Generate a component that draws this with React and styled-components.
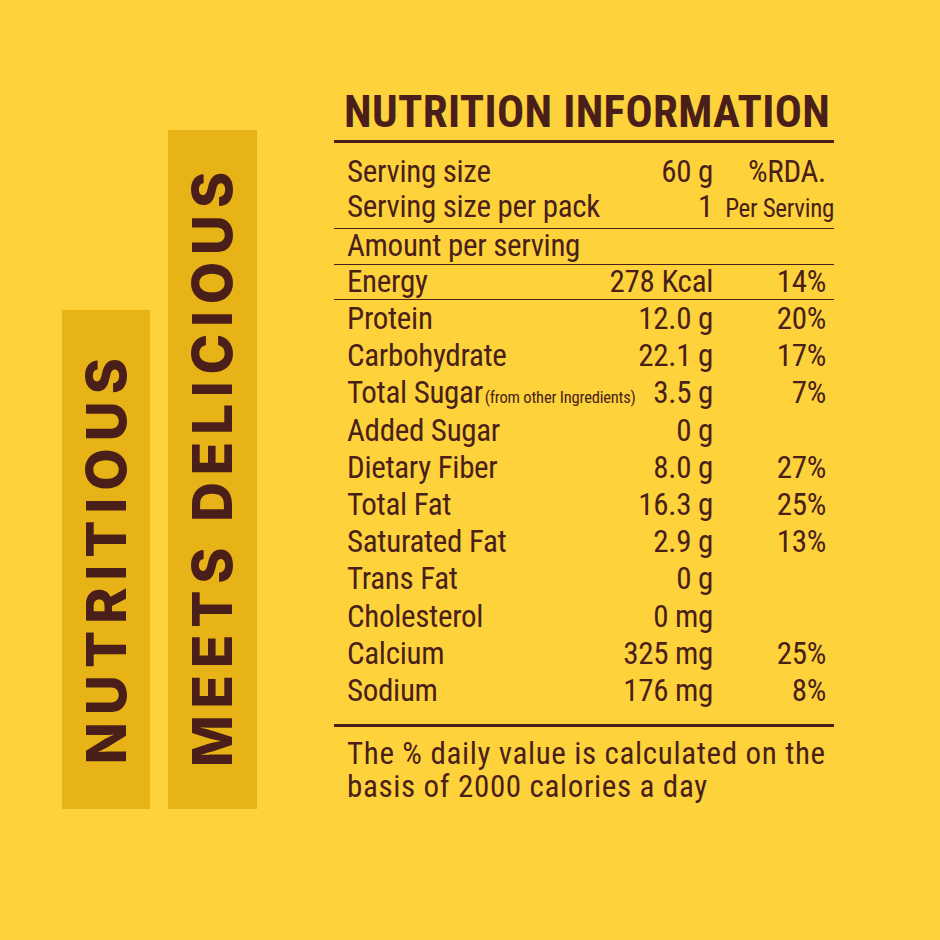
import React from "react";
import styled, { createGlobalStyle } from "styled-components";

const INK = "#4A1F1A";

const Global = createGlobalStyle`
  html, body { margin: 0; padding: 0; background: #FDD23B; }
  body { width: 940px; height: 940px; overflow: hidden; }
`;

const Page = styled.div`
  width: 940px;
  height: 940px;
  background: #FDD23B;
  display: flex;
  align-items: flex-start;
  color: ${INK};
`;

const Banners = styled.div`
  display: flex;
  align-items: flex-end;
  gap: 18px;
  margin-left: 62px;
  margin-top: 130px;
  height: 679px;
`;

const Banner = styled.div`
  width: ${(p) => p.$w}px;
  height: ${(p) => p.$h}px;
  background: #E8B317;
  display: flex;
  align-items: center;
  justify-content: center;
  padding-bottom: ${(p) => p.$lift || 0}px;
  box-sizing: border-box;
`;

const BannerText = styled.span`
  writing-mode: vertical-rl;
  transform: rotate(180deg);
  font-family: Inter, "Open Sans", sans-serif;
  font-weight: 800;
  font-size: 55px;
  letter-spacing: ${(p) => p.$ls}px;
  line-height: 1;
  white-space: nowrap;
`;

const Panel = styled.section`
  margin-left: 77px;
  margin-top: 89px;
  width: 500px;
  font-family: "Roboto Condensed", "Liberation Sans Narrow", "DejaVu Sans Condensed", sans-serif;
`;

const Title = styled.h1`
  margin: 0;
  padding: 0 0 6px 10px;
  font-size: 45px;
  font-weight: 700;
  line-height: 45px;
  letter-spacing: 0.35px;
  white-space: nowrap;
  border-bottom: 3px solid ${INK};
`;

const Group = styled.div`
  padding-top: ${(p) => p.$pt || 0}px;
  padding-bottom: ${(p) => p.$pb || 0}px;
  border-bottom: ${(p) => p.$rule || 0}px solid ${INK};
`;

const Row = styled.div`
  display: grid;
  grid-template-columns: 1fr auto 113px;
  align-items: baseline;
  height: ${(p) => p.$h}px;
  line-height: ${(p) => p.$h}px;
  padding: 0 8px 0 13px;
  font-size: 31px;
  letter-spacing: -0.3px;
  white-space: nowrap;
`;

const Label = styled.span``;

const Note = styled.span`
  font-size: 16.5px;
  letter-spacing: -0.2px;
  margin-left: 2px;
`;

const Value = styled.span`
  justify-self: end;
`;

const Pct = styled.span`
  justify-self: end;
  font-size: ${(p) => (p.$small ? 25 : 31)}px;
  margin-right: ${(p) => (p.$small ? -8 : 0)}px;
`;

const Footer = styled.p`
  margin: 0;
  padding: 11px 0 0 13px;
  font-size: 31px;
  line-height: 32.3px;
  letter-spacing: 0.65px;
  white-space: nowrap;
`;

const rows = [
  ["Protein", "12.0 g", "20%"],
  ["Carbohydrate", "22.1 g", "17%"],
  ["Total Sugar", "3.5 g", "7%", "(from other Ingredients)"],
  ["Added Sugar", "0 g", ""],
  ["Dietary Fiber", "8.0 g", "27%"],
  ["Total Fat", "16.3 g", "25%"],
  ["Saturated Fat", "2.9 g", "13%"],
  ["Trans Fat", "0 g", ""],
  ["Cholesterol", "0 mg", ""],
  ["Calcium", "325 mg", "25%"],
  ["Sodium", "176 mg", "8%"],
];

export default function App() {
  return (
    <>
      <Global />
      <Page>
        <Banners>
          <Banner $w={88} $h={499} $lift={4}>
            <BannerText $ls={7}>NUTRITIOUS</BannerText>
          </Banner>
          <Banner $w={89} $h={679} $lift={6}>
            <BannerText $ls={6.8}>MEETS DELICIOUS</BannerText>
          </Banner>
        </Banners>
        <Panel>
          <Title>NUTRITION INFORMATION</Title>
          <Group $pt={11} $pb={3.5} $rule={1.5}>
            <Row $h={35}>
              <Label>Serving size</Label>
              <Value>60 g</Value>
              <Pct>%RDA.</Pct>
            </Row>
            <Row $h={35}>
              <Label>Serving size per pack</Label>
              <Value>1</Value>
              <Pct $small>Per Serving</Pct>
            </Row>
          </Group>
          <Group $pb={1.5} $rule={1.5}>
            <Row $h={34}>
              <Label>Amount per serving</Label>
            </Row>
          </Group>
          <Group $rule={1.5}>
            <Row $h={34}>
              <Label>Energy</Label>
              <Value>278 Kcal</Value>
              <Pct>14%</Pct>
            </Row>
          </Group>
          <Group $pb={15.3} $rule={3}>
            {rows.map(([l, v, p, n]) => (
              <Row key={l} $h={37.2}>
                <Label>
                  {l}
                  {n && <Note>{n}</Note>}
                </Label>
                <Value>{v}</Value>
                <Pct>{p}</Pct>
              </Row>
            ))}
          </Group>
          <Footer>
            The % daily value is calculated on the
            <br />
            basis of 2000 calories a day
          </Footer>
        </Panel>
      </Page>
    </>
  );
}
